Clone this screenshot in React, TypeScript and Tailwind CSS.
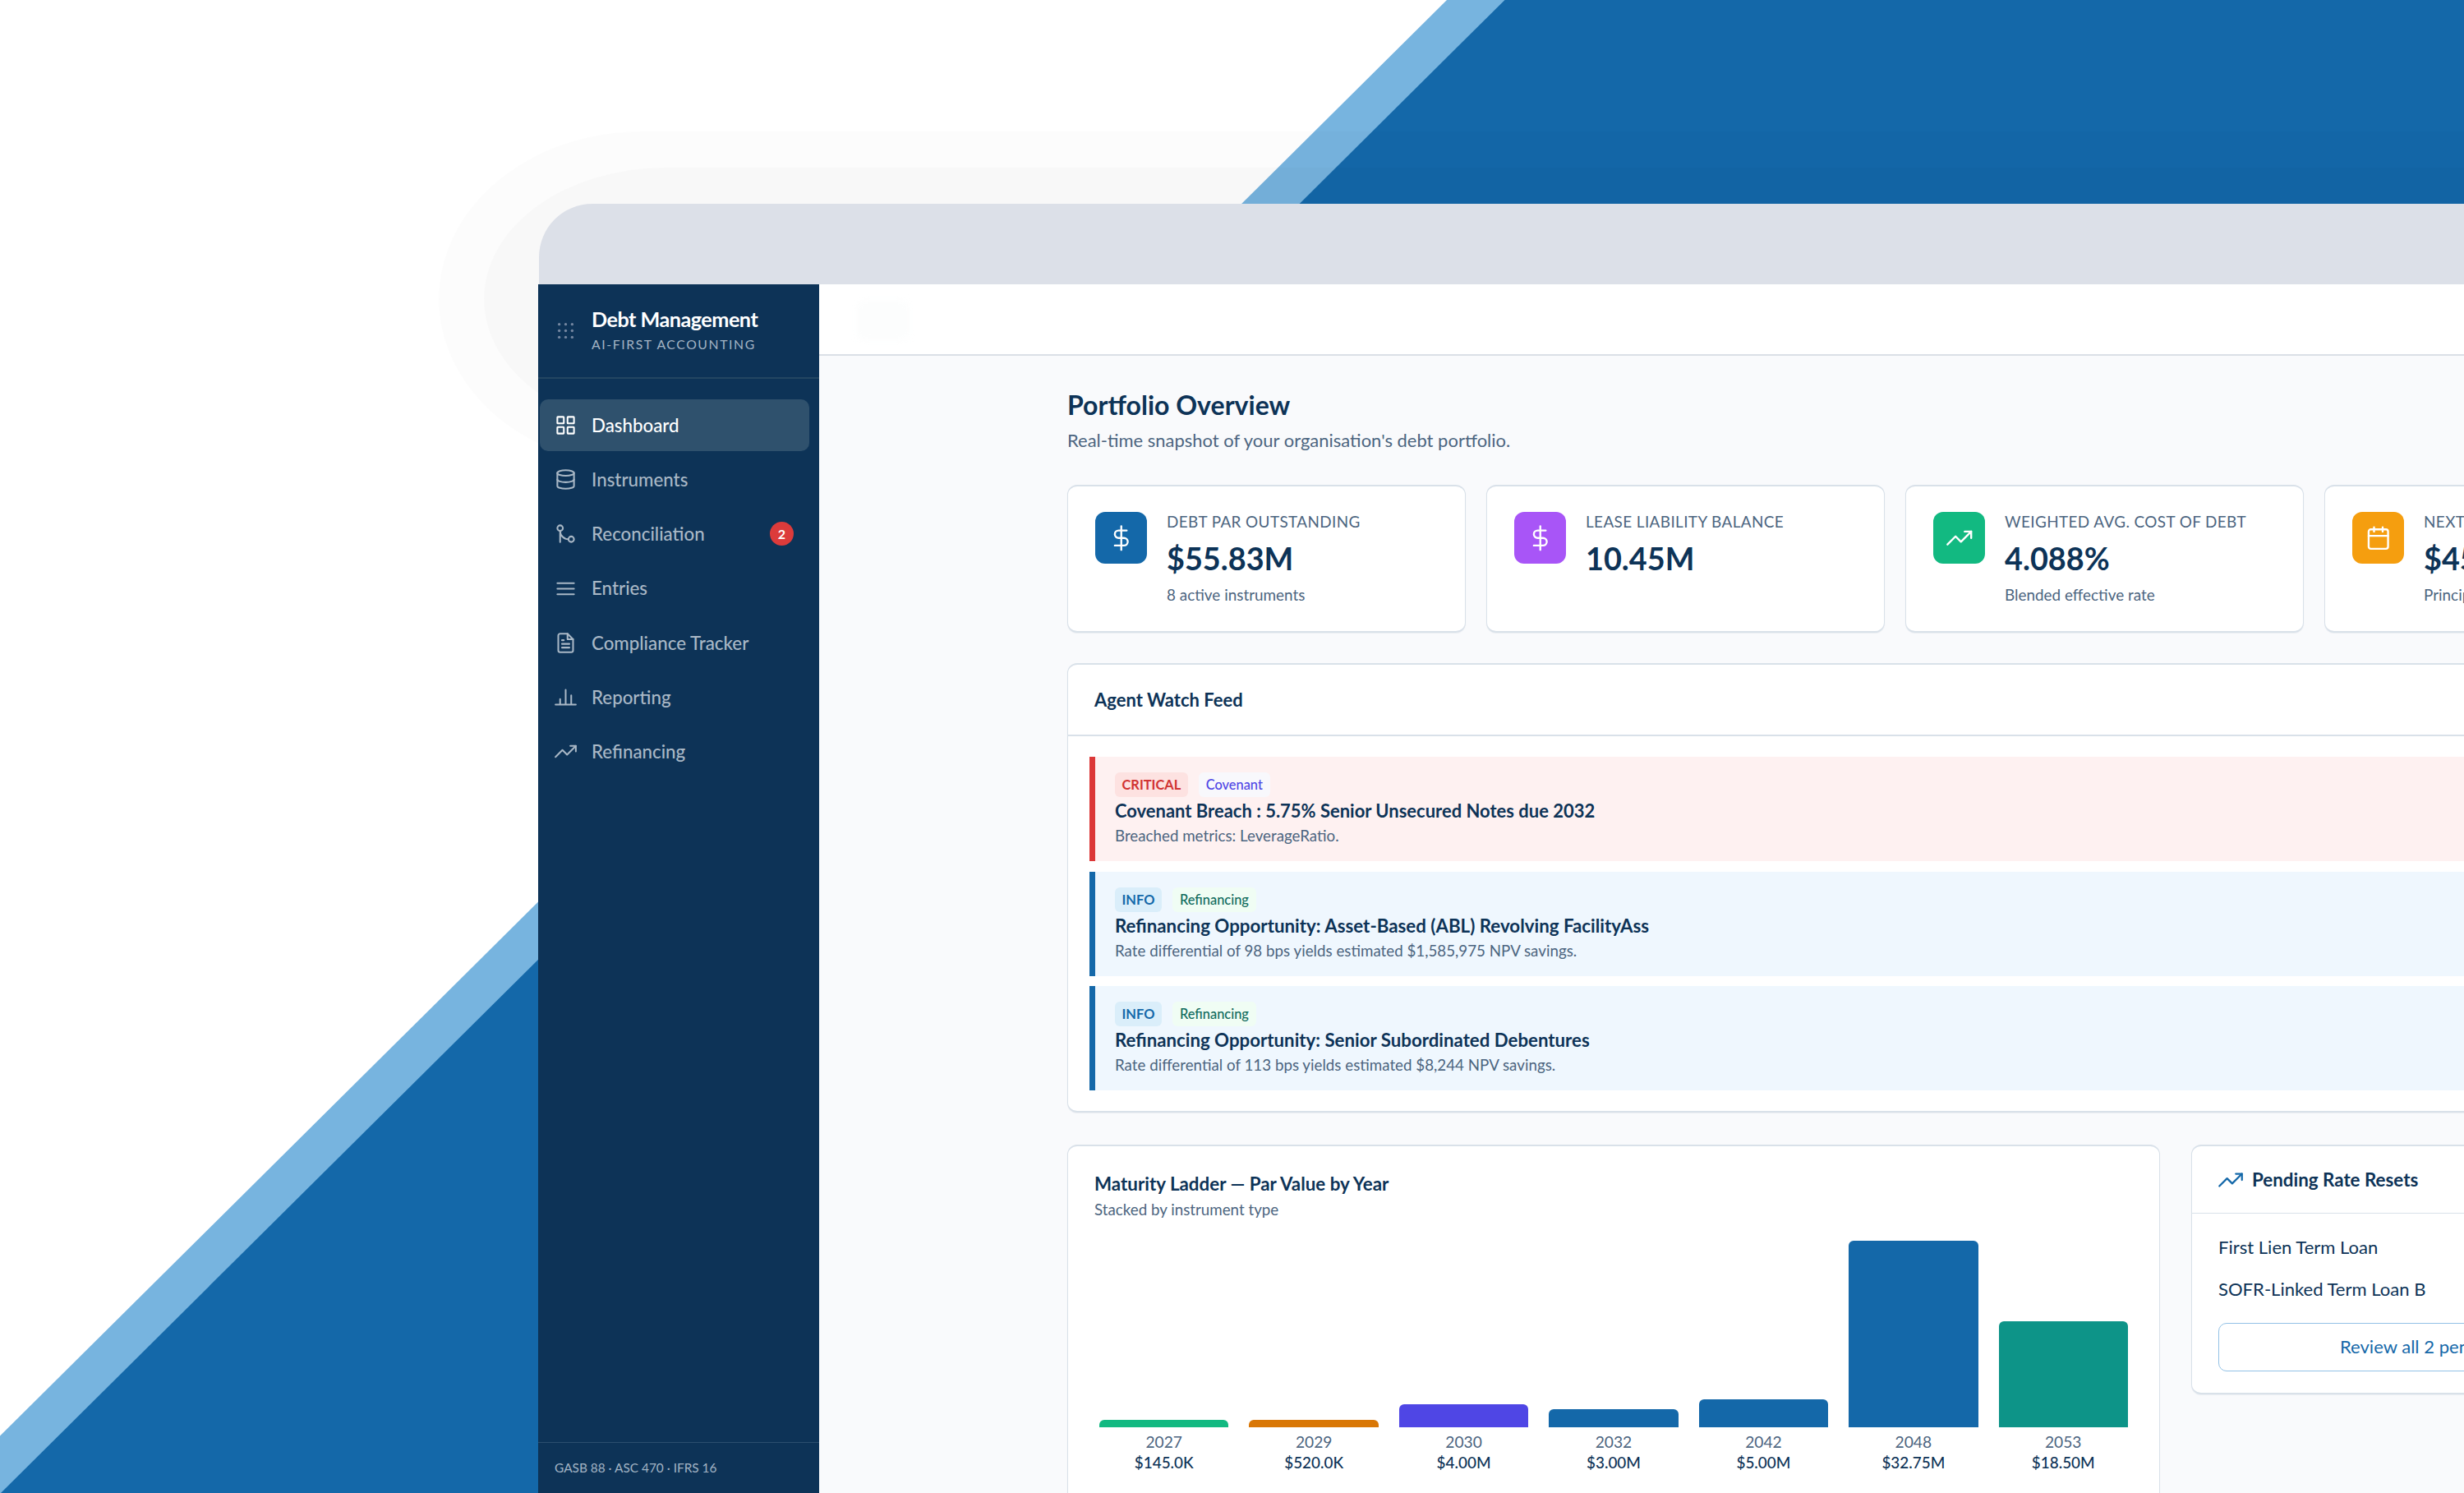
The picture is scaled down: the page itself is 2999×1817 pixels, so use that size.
import React from 'react';

type IconName =
    | 'grip'
    | 'grid'
    | 'database'
    | 'merge'
    | 'menu'
    | 'file'
    | 'bars'
    | 'trend'
    | 'dollar'
    | 'calendar';

const paths: Record<IconName, React.ReactNode> = {
    grip: (
        <g fill="currentColor" stroke="none">
            {[5, 12, 19].map(y => [5, 12, 19].map(x => <circle key={`${x}-${y}`} cx={x} cy={y} r="1.5" />))}
        </g>
    ),
    grid: (
        <>
            <rect x="3" y="3" width="7" height="7" rx="0.5" />
            <rect x="14" y="3" width="7" height="7" rx="0.5" />
            <rect x="14" y="14" width="7" height="7" rx="0.5" />
            <rect x="3" y="14" width="7" height="7" rx="0.5" />
        </>
    ),
    database: (
        <>
            <ellipse cx="12" cy="5" rx="9" ry="3" />
            <path d="M21 12c0 1.66-4 3-9 3s-9-1.34-9-3" />
            <path d="M3 5v14c0 1.66 4 3 9 3s9-1.34 9-3V5" />
        </>
    ),
    merge: (
        <>
            <circle cx="18" cy="18" r="3" />
            <circle cx="6" cy="6" r="3" />
            <path d="M6 21V9a9 9 0 0 0 9 9" />
        </>
    ),
    menu: <path d="M3 6h18M3 12h18M3 18h18" />,
    file: (
        <>
            <path d="M14 2H6a2 2 0 0 0-2 2v16a2 2 0 0 0 2 2h12a2 2 0 0 0 2-2V8z" />
            <path d="M14 2v6h6M16 13H8M16 17H8M10 9H8" />
        </>
    ),
    bars: <path d="M18 20V10M12 20V4M6 20v-6M1 20h22" />,
    trend: (
        <>
            <path d="M23 6l-9.5 9.5-5-5L1 18" />
            <path d="M17 6h6v6" />
        </>
    ),
    dollar: <path d="M12 1v22M17 5H9.5a3.5 3.5 0 0 0 0 7h5a3.5 3.5 0 0 1 0 7H6" />,
    calendar: (
        <>
            <rect x="3" y="4" width="18" height="18" rx="2" />
            <path d="M16 2v4M8 2v4M3 10h18" />
        </>
    ),
};

function Icon({ name, className }: { name: IconName; className: string }) {
    return (
        <svg
            viewBox="0 0 24 24"
            fill="none"
            stroke="currentColor"
            strokeWidth="1.8"
            strokeLinecap="round"
            strokeLinejoin="round"
            className={`shrink-0 overflow-visible ${className}`}
        >
            {paths[name]}
        </svg>
    );
}

type NavItem = {
    label: string;
    icon: IconName;
    active?: boolean;
    badge?: number;
};

const navItems: NavItem[] = [
    { label: 'Dashboard', icon: 'grid', active: true },
    { label: 'Instruments', icon: 'database' },
    { label: 'Reconciliation', icon: 'merge', badge: 2 },
    { label: 'Entries', icon: 'menu' },
    { label: 'Compliance Tracker', icon: 'file' },
    { label: 'Reporting', icon: 'bars' },
    { label: 'Refinancing', icon: 'trend' },
];

type Stat = {
    label: string;
    value: string;
    note?: string;
    icon: IconName;
    tile: string;
};

const stats: Stat[] = [
    { label: 'DEBT PAR OUTSTANDING', value: '$55.83M', note: '8 active instruments', icon: 'dollar', tile: 'bg-[#1468a9]' },
    { label: 'LEASE LIABILITY BALANCE', value: '10.45M', icon: 'dollar', tile: 'bg-[#a855f7]' },
    { label: 'WEIGHTED AVG. COST OF DEBT', value: '4.088%', note: 'Blended effective rate', icon: 'trend', tile: 'bg-[#12b981]' },
    { label: 'NEXT 12M DEBT SERVICE', value: '$45.20M', note: 'Principal + interest', icon: 'calendar', tile: 'bg-[#f59e0f]' },
];

type Alert = {
    level: 'CRITICAL' | 'INFO';
    tag: string;
    title: string;
    titleSize: string;
    detail: string;
};

const alerts: Alert[] = [
    {
        level: 'CRITICAL',
        tag: 'Covenant',
        title: 'Covenant Breach : 5.75% Senior Unsecured Notes due 2032',
        titleSize: 'text-[21.97px]',
        detail: 'Breached metrics: LeverageRatio.',
    },
    {
        level: 'INFO',
        tag: 'Refinancing',
        title: 'Refinancing Opportunity: Asset-Based (ABL) Revolving FacilityAss',
        titleSize: 'text-[22.3px]',
        detail: 'Rate differential of 98 bps yields estimated $1,585,975 NPV savings.',
    },
    {
        level: 'INFO',
        tag: 'Refinancing',
        title: 'Refinancing Opportunity: Senior Subordinated Debentures',
        titleSize: 'text-[22.25px]',
        detail: 'Rate differential of 113 bps yields estimated $8,244 NPV savings.',
    },
];

const maturities = [
    { year: '2027', amount: '$145.0K', height: 9, color: 'bg-[#12b981]' },
    { year: '2029', amount: '$520.0K', height: 9, color: 'bg-[#d97706]' },
    { year: '2030', amount: '$4.00M', height: 28, color: 'bg-[#4f46e5]' },
    { year: '2032', amount: '$3.00M', height: 22, color: 'bg-[#1468a9]' },
    { year: '2042', amount: '$5.00M', height: 34, color: 'bg-[#1468a9]' },
    { year: '2048', amount: '$32.75M', height: 227, color: 'bg-[#1468a9]' },
    { year: '2053', amount: '$18.50M', height: 129, color: 'bg-[#0d9488]' },
];

const card = 'rounded-xl border-x border-y-2 border-[#d9e1e9] bg-white shadow-[0_1px_1px_rgba(13,51,87,0.06)]';

function Backdrop() {
    return (
        <>
            <svg className="absolute inset-0 -z-10" width="2999" height="1817" viewBox="0 0 2999 1817">
                <polygon points="1761,0 1840,0 0,1826 0,1747.5" fill="#77b4df" />
                <polygon points="1831.5,0 2999,0 2999,1817 1,1817" fill="#1468a9" />
            </svg>
            {/* soft two-step shadow around the device corner */}
            <div className="absolute top-[160px] left-[534px] -z-10 h-[408px] w-[2700px] rounded-[246px/204px] bg-black/[0.012]" />
            <div className="absolute top-[204px] left-[589px] -z-10 h-[320px] w-[2700px] rounded-[220px/160px] bg-black/[0.016]" />
        </>
    );
}

function Sidebar() {
    return (
        <aside className="flex w-[342px] shrink-0 flex-col bg-[#0d3357]">
            <div className="flex h-[115px] items-center gap-[18px] border-b-2 border-[#234662] pl-5">
                <Icon name="grip" className="size-[27px] text-[#7386a0]" />
                <div className="pb-0.5">
                    <div className="text-[25.2px] leading-[34px] font-bold tracking-[-0.5px] text-white">Debt Management</div>
                    <div className="text-[15.75px] leading-[27px] tracking-[1.6px] text-[#a3b4c4]">AI-FIRST ACCOUNTING</div>
                </div>
            </div>

            <nav className="flex flex-1 flex-col gap-[3px] pt-[25px] pr-3 pl-0.5">
                {navItems.map(item => (
                    <div
                        key={item.label}
                        className={`flex h-[63.2px] items-center rounded-[10px] pr-[19px] pl-[18px] text-[22.3px] font-medium ${
                            item.active ? 'bg-[#2f516d] text-white' : 'text-[#a9b8c6]'
                        }`}
                    >
                        <Icon name={item.icon} className="mr-[18px] size-[27px]" />
                        {item.label}
                        {item.badge && (
                            <span className="ml-auto flex size-[29px] items-center justify-center rounded-full bg-[#dc3b3b] text-[16px] font-bold text-white">
                                {item.badge}
                            </span>
                        )}
                    </div>
                ))}
            </nav>

            <div className="h-[62px] border-t border-[#2b4f6e] pl-5 text-[15.4px] leading-[61px] text-[#a3b4c4]">
                GASB 88 · ASC 470 · IFRS 16
            </div>
        </aside>
    );
}

function StatCard({ stat }: { stat: Stat }) {
    return (
        <div className={`flex h-[180px] gap-6 pt-[31px] pl-[33px] ${card}`}>
            <div className={`flex size-[63px] shrink-0 items-center justify-center rounded-xl text-white ${stat.tile}`}>
                <Icon name={stat.icon} className="size-[31.5px]" />
            </div>
            <div className="-mt-px whitespace-nowrap">
                <div className="text-[18.9px] leading-[25px] tracking-[0.4px] text-[#4c6580]">{stat.label}</div>
                <div className="mt-2 text-[37.8px] leading-[50px] font-bold text-[#0d3357]">{stat.value}</div>
                <div className="mt-1.5 text-[18.9px] leading-[25px] text-[#4c6580]">{stat.note}</div>
            </div>
        </div>
    );
}

function AlertRow({ alert }: { alert: Alert }) {
    const critical = alert.level === 'CRITICAL';
    return (
        <div
            className={`h-[127px] border-l-[7px] pt-[19px] pl-6 ${
                critical ? 'border-[#dc3838] bg-[#fef1f1]' : 'border-[#1468a9] bg-[#eff7fe]'
            }`}
        >
            <div className="flex gap-[13px]">
                <span
                    className={`h-[30px] rounded-md px-[8.5px] text-[16.4px] leading-[30px] font-bold ${
                        critical ? 'bg-[#fde2e1] text-[#d13232]' : 'bg-[#daeefa] text-[#1468a9]'
                    }`}
                >
                    {alert.level}
                </span>
                <span
                    className={`h-[30px] rounded-md px-[9px] text-[16.4px] leading-[30px] font-medium ${
                        critical ? 'bg-[#f8f8fc] text-[#4f46e5]' : 'bg-[#f0fdf4] text-[#0f6b5c]'
                    }`}
                >
                    {alert.tag}
                </span>
            </div>
            <div className={`mt-px leading-[31px] font-bold text-[#0d3357] ${alert.titleSize}`}>{alert.title}</div>
            <div className="mt-0.5 text-[18.75px] leading-[25px] text-[#4c6580]">{alert.detail}</div>
        </div>
    );
}

function MaturityLadder() {
    return (
        <div className={`w-[1331px] px-8 pt-[31px] ${card}`}>
            <div className="text-[22.35px] leading-[30px] font-bold text-[#0d3357]">Maturity Ladder — Par Value by Year</div>
            <div className="mt-[3px] text-[18.75px] leading-[25px] text-[#4c6580]">Stacked by instrument type</div>
            <div className="flex gap-[25px] px-1.5">
                {maturities.map(m => (
                    <div key={m.year} className="flex flex-1 flex-col items-center">
                        <div className="flex h-[253px] w-full items-end">
                            <div className={`w-full rounded-t-md ${m.color}`} style={{ height: m.height }} />
                        </div>
                        <div className="mt-[5px] text-[19.2px] leading-[25px] text-[#4c6580]">{m.year}</div>
                        <div className="text-[18.9px] leading-[25px] font-medium text-[#0d3357]">{m.amount}</div>
                    </div>
                ))}
            </div>
        </div>
    );
}

function PendingResets() {
    return (
        <div className={`h-[304px] w-[647px] shrink-0 self-start ${card}`}>
            <div className="flex h-[82px] items-center gap-[11px] border-b border-[#d9e1e9] pl-8 text-[22.35px] font-bold text-[#0d3357]">
                <Icon name="trend" className="size-[30px] text-[#1468a9]" />
                Pending Rate Resets
            </div>
            <div className="px-8 pt-[15px] text-[22.05px] text-[#0d3357]">
                <div className="leading-[51px]">First Lien Term Loan</div>
                <div className="leading-[51px]">SOFR-Linked Term Loan B</div>
                <div className="mt-[16px] h-[59px] rounded-[10px] border border-[#93c2e6] pl-[147px] leading-[56px] text-[#1468a9]">
                    Review all 2 pending resets
                </div>
            </div>
        </div>
    );
}

export default function App() {
    return (
        <div className="relative isolate h-[1817px] w-[2999px] overflow-hidden bg-white pt-[248px] pl-[655px] font-[Lato,sans-serif]">
            <Backdrop />
            <div className="ml-px h-[98px] rounded-tl-[65px] bg-[#dce0e8]" />
            <div className="flex h-[1471px]">
                <Sidebar />
                <main className="flex min-w-0 flex-1 flex-col overflow-hidden bg-[#f9fafc]">
                    <header className="h-[87px] shrink-0 border-b-2 border-[#dadfe6] bg-white pt-5 pl-[46px]">
                        <div className="h-[48px] w-[64px] rounded-lg bg-[#fcfdfd] blur-[4px]" />
                    </header>

                    <div className="ml-[302px] w-[2015px] pt-[40px]">
                        <h1 className="text-[32.05px] leading-[40px] font-bold text-[#0d3357]">Portfolio Overview</h1>
                        <p className="mt-2 text-[21.97px] leading-[30px] text-[#4c6580]">
                            Real-time snapshot of your organisation's debt portfolio.
                        </p>

                        <div className="mt-[39px] grid grid-cols-4 gap-[25px]">
                            {stats.map(stat => (
                                <StatCard key={stat.label} stat={stat} />
                            ))}
                        </div>

                        <section className={`mt-[37px] h-[547px] ${card}`}>
                            <div className="h-[87px] border-b-2 border-[#d9e1e9] pl-8 text-[22px] leading-[85px] font-bold text-[#0d3357]">
                                Agent Watch Feed
                            </div>
                            <div className="flex flex-col gap-[12.6px] px-[26px] pt-[25px]">
                                {alerts.map(alert => (
                                    <AlertRow key={alert.title} alert={alert} />
                                ))}
                            </div>
                        </section>

                        <div className="mt-[39px] flex h-[480px] gap-[38px]">
                            <MaturityLadder />
                            <PendingResets />
                        </div>
                    </div>
                </main>
            </div>
        </div>
    );
}
